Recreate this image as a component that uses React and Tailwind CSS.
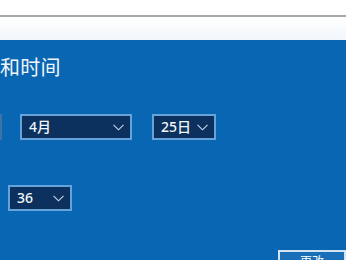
import React from "react";

function Chevron({ className = "" }) {
  return (
    <svg width="11" height="7" viewBox="0 0 11 7" className={className} fill="none">
      <path d="M0.5 0.8 L5.5 5.8 L10.5 0.8" stroke="#c9d7e6" strokeWidth="1.1" />
    </svg>
  );
}

function Drop({ label, width, className = "" }) {
  return (
    <div
      className={`flex items-center justify-between h-[26px] border-2 border-[#66a3da] bg-[#0c315e] pl-[7px] ${className}`}
      style={{ width }}
    >
      <span className="text-[14px] leading-none text-[#f2f6fa] font-medium">{label}</span>
      <Chevron className="mr-[6px]" />
    </div>
  );
}

export default function App() {
  return (
    <div
      className="w-[346px] h-[260px] overflow-hidden flex flex-col bg-white"
      style={{ fontFamily: '"Noto Sans", "Noto Sans CJK SC", sans-serif' }}
    >
      <div className="h-[15px] bg-white shrink-0" />
      <div className="h-[2px] bg-[#a7a7a7] shrink-0" />
      <div className="h-[23px] shrink-0 bg-gradient-to-b from-white to-[#f1f7fc]" />
      <div className="flex-1 bg-[#0966b3] flex flex-col">
        <div className="pt-[14px] h-[42px] text-[20px] leading-[28px] text-[#f2f6fa] tracking-[0.3px]">
          和时间
        </div>
        <div className="mt-[32px] flex items-center">
          <div className="w-[2px] h-[26px] bg-[#3f73a8]" />
          <Drop label="4月" width={112} className="ml-[18px]" />
          <Drop label="25日" width={64} className="ml-[20px]" />
        </div>
        <div className="mt-[45px] flex">
          <Drop label="36" width={64} className="ml-[8px]" />
        </div>
        <div className="mt-[39px] flex">
          <div className="ml-[278px] w-[80px] h-[30px] border-2 border-[#d6e3f0] bg-[#1a6fb8] flex justify-center pt-[4px]">
            <span className="text-[12px] leading-none text-white">更改</span>
          </div>
        </div>
      </div>
    </div>
  );
}
